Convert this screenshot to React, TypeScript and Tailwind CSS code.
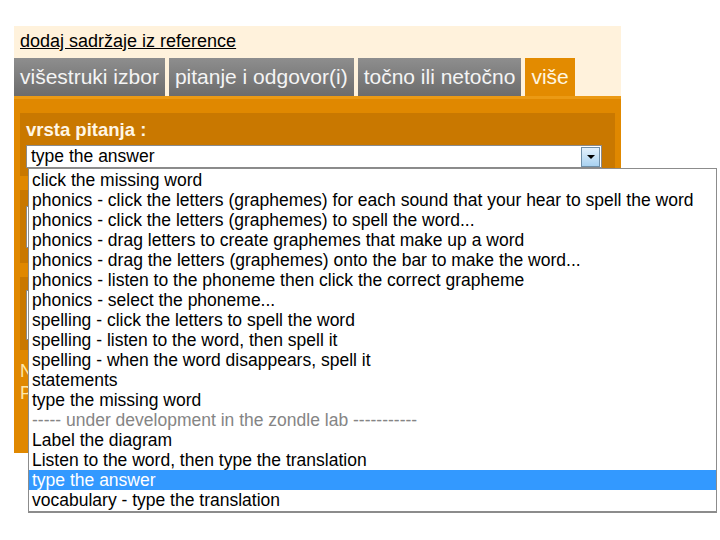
import React from "react";

const options = [
  "click the missing word",
  "phonics - click the letters (graphemes) for each sound that your hear to spell the word",
  "phonics - click the letters (graphemes) to spell the word...",
  "phonics - drag letters to create graphemes that make up a word",
  "phonics - drag the letters (graphemes) onto the bar to make the word...",
  "phonics - listen to the phoneme then click the correct grapheme",
  "phonics - select the phoneme...",
  "spelling - click the letters to spell the word",
  "spelling - listen to the word, then spell it",
  "spelling - when the word disappears, spell it",
  "statements",
  "type the missing word",
  "----- under development in the zondle lab -----------",
  "Label the diagram",
  "Listen to the word, then type the translation",
  "type the answer",
  "vocabulary - type the translation",
];

const tabs = ["višestruki izbor", "pitanje i odgovor(i)", "točno ili netočno"];

export default function App() {
  const selected = "type the answer";

  return (
    <div className="min-h-screen bg-white pl-[14px] pt-[26px] font-['Liberation_Sans',Arial,sans-serif]">
      <div className="relative w-[607px]">
        <div className="bg-[#fff2dc] px-[6px] pt-[4px]">
          <a href="#" className="text-[18px] leading-[23px] text-black underline">
            dodaj sadržaje iz reference
          </a>
          <div className="-ml-[6px] mt-[4px] flex gap-[4px]">
            {tabs.map((tab) => (
              <div
                key={tab}
                className="flex h-[38px] items-center bg-gradient-to-b from-[#8e8e8e] to-[#6c6c6c] px-[6px] text-[21px] text-[#f4f4f4]"
              >
                {tab}
              </div>
            ))}
            <div className="flex h-[38px] items-center bg-[#e38b00] px-[6px] text-[21px] text-[#fff6e0]">više</div>
          </div>
        </div>

        <div className="h-[357px] border-t-[3px] border-[#eb9a14] bg-[#e08800] px-[6px] pt-[14px]">
          <div className="bg-[#c97800] px-[6px] pb-[8px] pt-[4px]">
            <div className="text-[18.5px] font-bold leading-[25px] text-[#fff6e6]">vrsta pitanja :</div>
            <div className="mt-[3px] flex h-[23px] w-[576px] items-center justify-between border border-[#8a8a8a] bg-white pl-[4px] pr-[1px]">
              <span className="text-[17.5px] text-black">{selected}</span>
              <span className="flex h-[20px] w-[19px] items-center justify-center border border-[#6f8fa8] bg-gradient-to-b from-[#e4f1fc] to-[#a9d2f0]">
                <span className="h-0 w-0 border-x-[4px] border-t-[4px] border-x-transparent border-t-black" />
              </span>
            </div>
          </div>

          <div className="mt-[14px] h-[73px] bg-[#c97800] px-[6px] pt-[16px]">
            <div className="h-[42px] w-[576px] border border-[#8a8a8a] bg-white" />
          </div>

          <div className="mt-[14px] h-[73px] bg-[#c97800] px-[6px] pt-[13px]">
            <div className="h-[50px] w-[576px] border border-[#8a8a8a] bg-white" />
          </div>

          <div className="mt-[10px] text-[18px] leading-[22px] text-[#ffe7a8]">
            <div>Napomena: ako ne vidite vrstu pitanja</div>
            <div>Pogledajte u zondle laboratoriju</div>
          </div>
        </div>

        <ul className="absolute left-[14px] top-[142px] w-[689px] border border-b-2 border-[#8c8c8c] bg-white py-[1px]">
          {options.map((opt) => {
            const isSel = opt === selected;
            const isLab = opt.startsWith("-----");
            return (
              <li
                key={opt}
                className={
                  "h-[20px] whitespace-nowrap pl-[3px] text-[17.5px] leading-[20px] " +
                  (isSel ? "bg-[#3399ff] text-white" : isLab ? "text-[#858585]" : "text-black")
                }
              >
                {opt}
              </li>
            );
          })}
        </ul>
      </div>
    </div>
  );
}
